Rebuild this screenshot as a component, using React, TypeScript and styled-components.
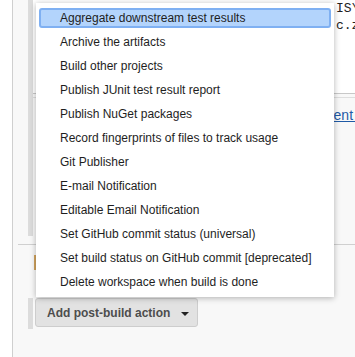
import React from 'react'
import styled, { createGlobalStyle } from 'styled-components'

const GlobalStyle = createGlobalStyle`
  html, body {
    margin: 0;
    padding: 0;
    background: #fff;
    font-family: "Liberation Sans", Arial, sans-serif;
    overflow: hidden;
  }
`

const Page = styled.div`
  position: relative;
  display: flex;
  width: 355px;
  height: 357px;
  overflow: hidden;
`

const Gutter = styled.div`
  width: 12px;
  flex: none;
  background: #fff;
`

const Main = styled.div`
  flex: 1;
  border-left: 1px solid #cfcfcf;
  background: #f8f8f8;
  display: flex;
  flex-direction: column;
`

const StepSection = styled.div`
  margin-left: 15px;
  height: 236px;
  border-left: 5px solid #dcdcdc;
  display: flex;
  flex-direction: column;
`

const CodeBox = styled.div`
  height: 93px;
  background: #fff;
  border-bottom: 1px solid #c8c8c8;
  font-family: "Liberation Mono", "Courier New", monospace;
  font-size: 13px;
  line-height: 17px;
  padding: 0 0 0 303px;
  color: #222;
  white-space: nowrap;
`

const CodeLine = styled.div``

const SubRule = styled.div`
  margin-top: 3px;
  height: 1px;
  background: #dedede;
`

const LinkRow = styled.div`
  padding: 8px 0 0 243px;
  white-space: nowrap;
`

const HelpLink = styled.a`
  color: #1f5aa6;
  text-decoration: underline;
  font-size: 14px;
`

const Divider = styled.div`
  margin: 8px 0 0 5px;
  height: 1px;
  background: #d0d0d0;
`

const Marker = styled.div`
  margin: 10px 0 0 21px;
  width: 2px;
  height: 15px;
  background: #d2a45e;
`

const ButtonRow = styled.div`
  margin: 28px 0 0 15px;
  height: 31px;
  border-left: 5px solid #dcdcdc;
  padding-left: 2px;
  display: flex;
  align-items: flex-start;
`

const AddButton = styled.button`
  height: 29px;
  padding: 0 8px 0 11px;
  display: flex;
  align-items: center;
  gap: 11px;
  background: #e2e2e2;
  border: 1px solid #cdcdcd;
  border-radius: 3px;
  font-family: "Liberation Sans", Arial, sans-serif;
  font-size: 12px;
  font-weight: bold;
  color: #4d4d4d;
`

const Caret = styled.span`
  width: 0;
  height: 0;
  border-left: 4px solid transparent;
  border-right: 4px solid transparent;
  border-top: 4px solid #222;
  margin-top: 2px;
`

const Menu = styled.ul`
  position: absolute;
  top: 3px;
  left: 36px;
  width: 298px;
  margin: 0;
  padding: 3px 0;
  list-style: none;
  background: #fff;
  box-shadow: 0 1px 6px rgba(0, 0, 0, 0.3);
  display: flex;
  flex-direction: column;
`

const MenuItem = styled.li<{ $active?: boolean }>`
  margin: 2px 3px;
  height: 20px;
  box-sizing: border-box;
  padding-left: ${(p) => (p.$active ? '19px' : '21px')};
  display: flex;
  align-items: center;
  font-size: 12px;
  color: #1e1e1e;
  white-space: nowrap;
  border-radius: 3px;
  border: ${(p) => (p.$active ? '2px solid #7fb0f2' : 'none')};
  background: ${(p) => (p.$active ? '#b3d4fc' : 'transparent')};
`

const actions = [
  'Aggregate downstream test results',
  'Archive the artifacts',
  'Build other projects',
  'Publish JUnit test result report',
  'Publish NuGet packages',
  'Record fingerprints of files to track usage',
  'Git Publisher',
  'E-mail Notification',
  'Editable Email Notification',
  'Set GitHub commit status (universal)',
  'Set build status on GitHub commit [deprecated]',
  'Delete workspace when build is done',
]

const App = () => {
  return (
    <Page>
      <GlobalStyle />
      <Gutter />
      <Main>
        <StepSection>
          <CodeBox>
            <CodeLine>IS\</CodeLine>
            <CodeLine>c.zip</CodeLine>
          </CodeBox>
          <SubRule />
          <LinkRow>
            <HelpLink href="#">environment variables</HelpLink>
          </LinkRow>
        </StepSection>
        <Divider />
        <Marker />
        <ButtonRow>
          <AddButton>
            Add post-build action
            <Caret />
          </AddButton>
        </ButtonRow>
      </Main>
      <Menu>
        {actions.map((a, i) => (
          <MenuItem key={a} $active={i === 0}>
            {a}
          </MenuItem>
        ))}
      </Menu>
    </Page>
  )
}

export default App
